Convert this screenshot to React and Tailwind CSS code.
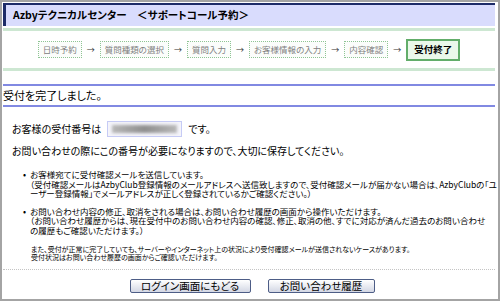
export default function App() {
  const font = {
    fontFamily: '"Noto Sans CJK JP", "Liberation Sans", sans-serif',
  };
  const steps = ["日時予約", "質問種類の選択", "質問入力", "お客様情報の入力", "内容確認"];

  return (
    <div
      style={font}
      className="w-[500px] h-[301px] overflow-hidden bg-white border-2 border-[#a4a4a4] p-px text-black [font-feature-settings:'palt'] leading-none"
    >
      {/* header */}
      <div className="h-[23px] bg-[#d9dcfd] border-t-2 border-l-[3px] border-[#1d2b68] flex items-center pl-[7px] mr-[2px]">
        <span className="text-[10.5px] font-bold">Azbyテクニカルセンター　＜サポートコール予約＞</span>
      </div>

      <div className="mt-[2px] h-[3px] bg-[#cde7d2] mr-[2px]" />

      {/* steps */}
      <div className="h-[37px] flex items-center justify-center gap-[5px] mr-[2px]">
        {steps.map((s) => (
          <div key={s} className="flex items-center gap-[5px]">
            <div className="h-[17px] px-[4px] flex items-center border border-dotted border-[#8fc594] bg-[#fbfdfb] text-[8.5px] text-[#808080]">
              {s}
            </div>
            <span className="text-[8px] text-[#333]">→</span>
          </div>
        ))}
        <div className="h-[22px] px-[6px] flex items-center border-2 border-[#62ad6a] bg-[#eaf8ea] text-[9.5px] font-bold">
          受付終了
        </div>
      </div>

      <div className="h-[3px] bg-[#cde7d2] mr-[2px]" />

      {/* completion title */}
      <div className="mt-[13px] border-t-2 border-b-2 border-[#8189e2] h-[23px] flex items-center mr-[2px]">
        <span className="text-[11px]">受付を完了しました。</span>
      </div>

      {/* receipt number */}
      <div className="mt-[14px] pl-[9px] flex items-center gap-[6px] text-[10px]">
        <span>お客様の受付番号は</span>
        <div className="w-[75px] h-[16px] border border-[#c6cbf5] bg-[#f4f4fa] flex items-center px-[4px] overflow-hidden">
          <div className="h-[8px] w-full bg-gradient-to-r from-[#b8b8b8] via-[#8f8f8f] to-[#b8b8b8] blur-[1.5px]" />
        </div>
        <span>です。</span>
      </div>
      <div className="mt-[9px] pl-[9px] text-[10px]">
        お問い合わせの際にこの番号が必要になりますので、大切に保存してください。
      </div>

      {/* notes */}
      <ul className="mt-[14px] pl-[20px] text-[8.5px] leading-[9.5px] whitespace-nowrap flex flex-col gap-[8px]">
        <li className="flex gap-[4px]">
          <span className="text-[9px]">•</span>
          <span>
            お客様宛てに受付確認メールを送信しています。
            <br />
            （受付確認メールはAzbyClub登録情報のメールアドレスへ送信致しますので、受付確認メールが届かない場合は、AzbyClubの「ユ
            <br />
            ーザー登録情報」でメールアドレスが正しく登録されているかご確認ください。）
          </span>
        </li>
        <li className="flex gap-[4px]">
          <span className="text-[9px]">•</span>
          <span>
            お問い合わせ内容の修正、取消をされる場合は、お問い合わせ履歴の画面から操作いただけます。
            <br />
            （お問い合わせ履歴からは、現在受付中のお問い合わせ内容の確認、修正、取消の他、すでに対応が済んだ過去のお問い合わせ
            <br />
            の履歴もご確認いただけます。）
          </span>
        </li>
      </ul>

      <div className="mt-[10px] pl-[28px] text-[7px] leading-[8px] whitespace-nowrap">
        また、受付が正常に完了していても、サーバーやインターネット上の状況により受付確認メールが送信されないケースがあります。
        <br />
        受付状況はお問い合わせ履歴の画面からご確認いただけます。
      </div>

      <div className="mt-[8px] border-t border-dotted border-[#c4c4c4] mr-[2px]" />

      {/* buttons */}
      <div className="mt-[9px] flex justify-center gap-[17px] pl-[4px]">
        <button className="w-[121px] h-[14px] rounded-[2px] border border-[#4d5d86] bg-gradient-to-b from-white to-[#d3d7e4] text-[10.5px] flex items-center justify-center">
          ログイン画面にもどる
        </button>
        <button className="w-[107px] h-[14px] rounded-[2px] border border-[#4d5d86] bg-gradient-to-b from-white to-[#d3d7e4] text-[10.5px] flex items-center justify-center">
          お問い合わせ履歴
        </button>
      </div>
    </div>
  );
}
